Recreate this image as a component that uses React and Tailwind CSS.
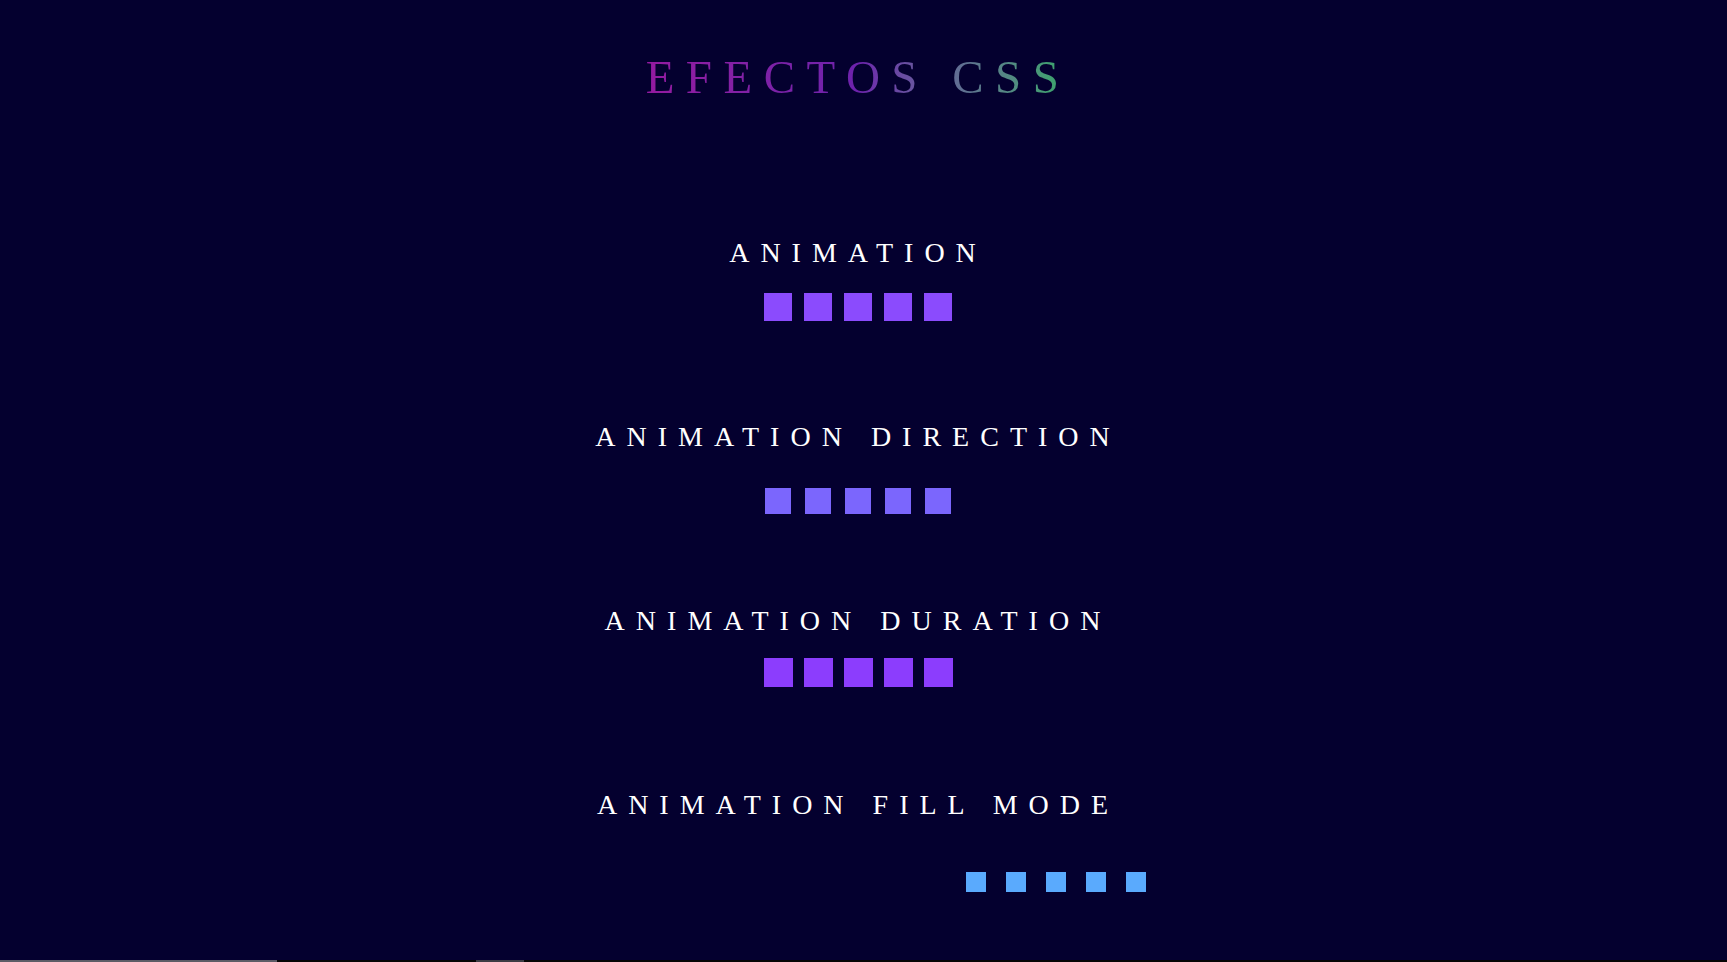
import React from 'react';

const serif = { fontFamily: '"Liberation Serif", "Times New Roman", serif' };

function Row({ color, size, gap, className = '' }) {
  return (
    <div className={`flex ${gap} ${className}`}>
      {[0, 1, 2, 3, 4].map((i) => (
        <div key={i} className={`${size} ${color}`} />
      ))}
    </div>
  );
}

function Heading({ children, className = '' }) {
  return (
    <h2
      style={serif}
      className={`text-[28px] leading-none tracking-[11px] text-white font-normal ${className}`}
    >
      {children}
    </h2>
  );
}

export default function App() {
  return (
    <div className="h-[962px] w-full bg-[#04002f] flex flex-col overflow-hidden">
      <div className="flex flex-col items-center pr-[11px] pt-[54px]">
        {/* Title */}
        <h1
          style={serif}
          className="text-[47px] leading-none tracking-[11.5px] font-normal bg-gradient-to-r from-[#941aa0] via-[#6d22ac] to-[#35a868] bg-clip-text text-transparent"
        >
          EFECTOS CSS
        </h1>

        {/* animation */}
        <Heading className="mt-[138px]">ANIMATION</Heading>
        <Row color="bg-[#8b4bfd]" size="w-[28px] h-[28px]" gap="gap-[12px]" className="mt-[26px]" />

        {/* animation-direction */}
        <Heading className="mt-[102px]">ANIMATION DIRECTION</Heading>
        <Row color="bg-[#7b66fd]" size="w-[26px] h-[26px]" gap="gap-[14px]" className="mt-[37px]" />

        {/* animation-duration */}
        <Heading className="mt-[93px]">ANIMATION DURATION</Heading>
        <Row color="bg-[#8c3dfd]" size="w-[29px] h-[29px]" gap="gap-[11px]" className="mt-[23px]" />

        {/* animation-fill-mode */}
        <Heading className="mt-[104px]">ANIMATION FILL MODE</Heading>
        <Row color="bg-[#5aaafd]" size="w-[20px] h-[20px]" gap="gap-[20px]" className="mt-[53px] ml-[396px]" />
      </div>

      {/* scrollbar strip */}
      <div className="mt-auto flex h-[2px] bg-[#050505]">
        <div className="w-[277px] bg-[#5c5c66]" />
        <div className="w-[199px]" />
        <div className="w-[48px] bg-[#3c3c44]" />
      </div>
    </div>
  );
}
